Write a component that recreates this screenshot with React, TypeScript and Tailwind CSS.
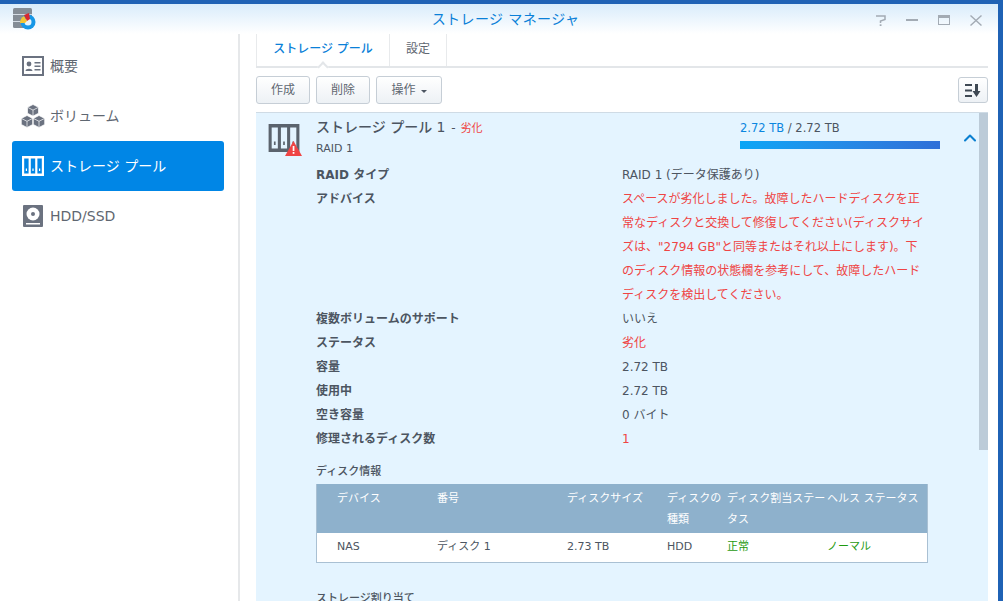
import { ChevronUp } from "lucide-react";

const infoRows = [
  { label: "複数ボリュームのサポート", value: "いいえ" },
  { label: "ステータス", value: "劣化", red: true },
  { label: "容量", value: "2.72 TB" },
  { label: "使用中", value: "2.72 TB" },
  { label: "空き容量", value: "0 バイト" },
  { label: "修理されるディスク数", value: "1", red: true },
];

const adviceLines = [
  "スペースが劣化しました。故障したハードディスクを正",
  "常なディスクと交換して修復してください(ディスクサイ",
  'ズは、"2794 GB"と同等またはそれ以上にします)。下',
  "のディスク情報の状態欄を参考にして、故障したハード",
  "ディスクを検出してください。",
];

function OverviewIcon() {
  return (
    <svg width="22" height="20" viewBox="0 0 22 20">
      <rect x="1" y="1" width="20" height="18" fill="none" stroke="#6b7280" strokeWidth="2" />
      <circle cx="7" cy="8" r="2.400" fill="#6b7280" />
      <path d="M3.500 15c0-3 7-3 7 0zM12.500 6h6v1.500h-6zM12.500 9.500h6V11h-6zM12.500 13h6v1.500h-6z" fill="#6b7280" />
    </svg>
  );
}

function VolumeIcon() {
  return (
    <svg width="24" height="24" viewBox="0 0 24 24" fill="#6b7280" stroke="#fff" strokeWidth="0.700">
      <path d="M12 0.500l5.500 2.800v6l-5.500 2.800-5.500-2.800v-6z" />
      <path d="M6.500 3.300l5.500 2.800 5.500-2.800M12 6.100v6" fill="none" />
      <path d="M6 11.500l5.700 2.900v6.100L6 23.500l-5.700-3v-6.100z" />
      <path d="M0.300 14.400L6 17.300l5.700-2.900M6 17.300v6.200" fill="none" />
      <path d="M18 11.500l5.700 2.900v6.100L18 23.500l-5.700-3v-6.100z" />
      <path d="M12.300 14.400L18 17.300l5.700-2.900M18 17.300v6.200" fill="none" />
    </svg>
  );
}

function PoolIcon({ fill, slot, width = 22, height = 20 }: { fill: string; slot: string; width?: number; height?: number }) {
  return (
    <svg width={width} height={height} viewBox="0 0 22 20" className="block">
      <rect width="22" height="20" fill={fill} />
      <rect x="2.200" y="2.500" width="4.400" height="15" fill={slot} />
      <rect x="8.800" y="2.500" width="4.400" height="15" fill={slot} />
      <rect x="15.400" y="2.500" width="4.400" height="15" fill={slot} />
      <rect x="3.800" y="12.500" width="1.200" height="2.500" fill={fill} />
      <rect x="10.400" y="12.500" width="1.200" height="2.500" fill={fill} />
      <rect x="17" y="12.500" width="1.200" height="2.500" fill={fill} />
    </svg>
  );
}

function DiskIcon() {
  return (
    <svg width="20" height="22" viewBox="0 0 20 22">
      <rect width="20" height="22" rx="1" fill="#6b7280" />
      <circle cx="10" cy="9" r="6.500" fill="#fff" />
      <circle cx="10" cy="9" r="2" fill="#6b7280" />
      <rect x="3" y="18" width="14" height="1.500" fill="#fff" />
    </svg>
  );
}

function AppIcon() {
  return (
    <svg width="24" height="24" viewBox="0 0 24 24">
      <rect x="0" y="1" width="19" height="20" rx="1.500" fill="#858d96" />
      <rect x="0" y="7" width="19" height="1" fill="#d6dde5" />
      <rect x="0" y="14" width="19" height="1" fill="#d6dde5" />
      <circle cx="15" cy="15" r="7.500" fill="#1797e6" />
      <circle cx="15" cy="15" r="3.500" fill="#e6f3fc" />
      <path d="M7 16a8 8 0 0 1 4-7l3 5-2 2z" fill="#f4c534" />
      <path d="M11 8l5-2 1 6-3 2z" fill="#d9282f" />
    </svg>
  );
}

const navItems = [
  { label: "概要", icon: <OverviewIcon /> },
  { label: "ボリューム", icon: <VolumeIcon /> },
  { label: "ストレージ プール", icon: <PoolIcon fill="#fff" slot="#0086e6" />, active: true },
  { label: "HDD/SSD", icon: <DiskIcon /> },
];

const tableCols = "grid grid-cols-[120px_130px_100px_60px_100px_1fr]";
const btn = "h-[28px] rounded-[3px] border border-[#c6ced6] bg-gradient-to-b from-white to-[#edf1f5] text-[#5f6771]";

export default function App() {
  return (
    <div
      className="h-[601px] w-[1003px] overflow-hidden bg-[#1f62b5] pt-[4px] pr-[5px] text-[12px] text-[#4c5561]"
      style={{ fontFamily: '"DejaVu Sans", "Noto Sans CJK JP", sans-serif' }}
    >
      <div className="h-[597px] overflow-hidden bg-white">
        {/* Title bar */}
        <div className="flex h-[30px] items-center bg-gradient-to-b from-[#d9ecfb] to-white pl-[13px] pr-[16px]">
          <AppIcon />
          <div className="flex-1 pl-[98px] pt-[1px] text-center text-[14px] tracking-[0.4px] text-[#0a80d8]">ストレージ マネージャ</div>
          <div className="flex items-center gap-[20px] pt-[2px]">
            <svg width="10" height="11" viewBox="0 0 10 11" fill="none" stroke="#a3abb4" strokeWidth="1.500">
              <path d="M0 1h9v3.500L4.500 6v2" />
              <path d="M3.700 9.300h1.800V11H3.700z" fill="#a3abb4" stroke="none" />
            </svg>
            <div className="h-[2px] w-[12px] bg-[#a3abb4]" />
            <div className="h-[10px] w-[12px] border border-t-[3px] border-[#a3abb4]" />
            <svg width="12" height="11" viewBox="0 0 12 11" stroke="#a3abb4" strokeWidth="1.400">
              <path d="M0.500 0.500l11 10M11.500 0.500l-11 10" />
            </svg>
          </div>
        </div>

        <div className="flex h-[567px]">
          {/* Sidebar */}
          <div className="w-[240px] shrink-0 border-r-2 border-[#e6e8ea] pl-[12px] pr-[14px] pt-[7px]">
            {navItems.map((item) => (
              <div
                key={item.label}
                className={`mb-[0.5px] flex h-[49.500px] items-center gap-[5px] rounded-[3px] pl-[9px] pt-[1px] text-[14px] ${
                  item.active ? "bg-[#0086e6] text-white" : "text-[#5f6771]"
                }`}
              >
                <div className="flex w-[24px] justify-center">{item.icon}</div>
                {item.label}
              </div>
            ))}
          </div>

          {/* Main */}
          <div className="ml-[16px] w-[732px]">
            <div className="flex h-[34px] items-stretch border-b-2 border-[#e3e6e9]">
              <div className="relative flex w-[134px] items-center justify-center border-x border-[#e8eaec] pb-[3px] font-medium text-[#0a80d8]">
                ストレージ プール
                <div className="absolute -bottom-[5px] left-[62px] h-[8px] w-[8px] rotate-45 border-l-2 border-t-2 border-[#e3e6e9] bg-white" />
              </div>
              <div className="flex w-[57px] items-center justify-center border-r border-[#e8eaec] pb-[3px] text-[#5f6771]">
                設定
              </div>
            </div>

            <div className="flex items-start gap-[6px] pt-[8px]">
              <button className={`${btn} w-[54px]`}>作成</button>
              <button className={`${btn} w-[54px]`}>削除</button>
              <button className={`${btn} flex w-[66px] items-center justify-center gap-[5px]`}>
                操作
                <span className="mt-[2px] border-x-[3px] border-t-[3px] border-x-transparent border-t-[#4c5561]" />
              </button>
              <button className="ml-auto mt-[1px] flex h-[26px] w-[30px] items-center justify-center rounded-[3px] border border-[#c6ced6] bg-gradient-to-b from-white to-[#edf1f5]">
                <svg width="16" height="13" viewBox="0 0 16 13" fill="#3f4954">
                  <path d="M0 0h7v2H0zM0 5.500h7v2H0zM0 11h7v2H0zM10 0h3v7h2.500l-4 6-4-6H10z" />
                </svg>
              </button>
            </div>

            {/* Pool panel */}
            <div className="relative mt-[8px] h-[490px] border-t border-[#cfdbe5] bg-[#e4f4ff]">
              {/* Scrollbar */}
              <div className="absolute right-0 top-0 h-[337px] w-[9px] bg-[#bccbd8]" />

              <div className="flex h-[50px]">
                <div className="relative ml-[12px] mt-[11px] h-[28px] w-[32px]">
                  <PoolIcon fill="#5b636d" slot="#e4f4ff" width={32} height={28} />
                  <svg className="absolute left-[17px] top-[17px]" width="17" height="15" viewBox="0 0 17 15">
                    <path d="M8.500 0L17 15H0z" fill="#ef4444" />
                    <rect x="7.700" y="5" width="1.700" height="5" fill="#fff" />
                    <rect x="7.700" y="11" width="1.700" height="1.800" fill="#fff" />
                  </svg>
                </div>
                <div className="ml-[16px] pt-[3px]">
                  <div className="leading-[22px]">
                    <span className="text-[14px] font-medium">ストレージ プール 1</span>
                    <span className="ml-[2px]"> - </span>
                    <span className="ml-[1px] text-[11px] text-[#ef4444]">劣化</span>
                  </div>
                  <div className="text-[11px] leading-[17px]">RAID 1</div>
                </div>
                <div className="ml-auto mr-[48px] w-[200px] pt-[6px]">
                  <div className="text-[11.500px] leading-[18px]">
                    <span className="text-[#0a86e0]">2.72 TB</span> / 2.72 TB
                  </div>
                  <div className="mt-[4px] h-[8px] bg-gradient-to-r from-[#08a6f6] to-[#2f6fd8]" />
                </div>
                <ChevronUp size={20} strokeWidth={2.500} className="absolute right-[8px] top-[15px] text-[#0a7fd0]" />
              </div>

              {/* Detail rows */}
              <div className="pl-[60px]">
                <div className="flex h-[24px] items-center">
                  <div className="w-[306px] font-bold">RAID タイプ</div>
                  <div>RAID 1 (データ保護あり)</div>
                </div>
                <div className="flex">
                  <div className="w-[306px] font-bold leading-[24px]">アドバイス</div>
                  <div className="leading-[24px] text-[#ef4444]">
                    {adviceLines.map((line) => (
                      <div key={line}>{line}</div>
                    ))}
                  </div>
                </div>
                {infoRows.map((row) => (
                  <div key={row.label} className="flex h-[24px] items-center">
                    <div className="w-[306px] font-bold">{row.label}</div>
                    <div className={row.red ? "text-[#ef4444]" : ""}>{row.value}</div>
                  </div>
                ))}

                <div className="mt-[12px] text-[11px] font-medium leading-[18px]">ディスク情報</div>
                <div className="mt-[3px] w-[612px] border-x border-b border-[#a9c0d3] bg-white">
                  <div className={`${tableCols} h-[49px] bg-[#8eb1cc] pt-[4px] text-[11px] leading-[21px] text-white`}>
                    <div className="pl-[20px]">デバイス</div>
                    <div>番号</div>
                    <div>ディスクサイズ</div>
                    <div>ディスクの種類</div>
                    <div>ディスク割当ステータス</div>
                    <div>ヘルス ステータス</div>
                  </div>
                  <div className={`${tableCols} h-[29px] items-center text-[11px]`}>
                    <div className="pl-[20px]">NAS</div>
                    <div>ディスク 1</div>
                    <div>2.73 TB</div>
                    <div>HDD</div>
                    <div className="text-[#1f9a10]">正常</div>
                    <div className="text-[#1f9a10]">ノーマル</div>
                  </div>
                </div>
                <div className="mt-[27px] text-[11px] font-medium leading-[18px]">ストレージ割り当て</div>
              </div>
            </div>
          </div>
        </div>
      </div>
    </div>
  );
}
